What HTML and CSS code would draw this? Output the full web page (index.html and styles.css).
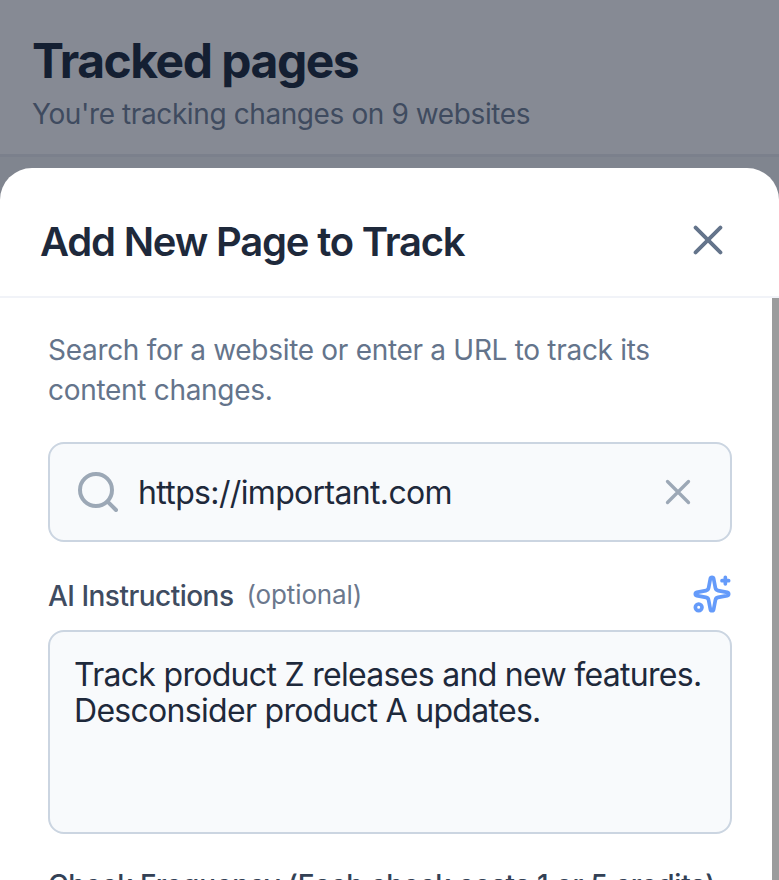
FILE: index.html
```html
<!DOCTYPE html>
<html lang="en">
<head>
<meta charset="utf-8">
<title>Tracked pages</title>
<link rel="stylesheet" href="styles.css">
</head>
<body>
<header class="page-header">
  <h1>Tracked pages</h1>
  <p>You're tracking changes on 9 websites</p>
</header>
<main class="sheet">
  <div class="sheet-head">
    <h2>Add New Page to Track</h2>
    <svg class="close" viewBox="0 0 30 30"><path d="M2.6 2.6 27.4 27.4M27.4 2.6 2.6 27.4"/></svg>
  </div>
  <div class="sheet-body">
    <div class="content">
      <p class="intro">Search for a website or enter a URL to track its<br>content changes.</p>
      <div class="search">
        <svg class="lens" viewBox="0 0 40 40"><circle cx="18" cy="18" r="16"/><path d="m29.6 29.6 8.4 8.4"/></svg>
        <span class="url">https://important.com</span>
        <svg class="clear" viewBox="0 0 26 26"><path d="M2.5 2.5 23.5 23.5M23.5 2.5 2.5 23.5"/></svg>
      </div>
      <div class="label-row">
        <span class="label">AI Instructions</span><span class="optional">(optional)</span>
        <svg class="sparkles" viewBox="0 0 24 24"><path d="M11.017 2.814a1 1 0 0 1 1.966 0l1.051 5.558a2 2 0 0 0 1.594 1.594l5.558 1.051a1 1 0 0 1 0 1.966l-5.558 1.051a2 2 0 0 0-1.594 1.594l-1.051 5.558a1 1 0 0 1-1.966 0l-1.051-5.558a2 2 0 0 0-1.594-1.594l-5.558-1.051a1 1 0 0 1 0-1.966l5.558-1.051a2 2 0 0 0 1.594-1.594zM20 2v4M22 4h-4"/><circle cx="4" cy="20" r="2"/></svg>
      </div>
      <div class="instructions">Track product Z releases and new features.<br>Desconsider product A updates.</div>
      <div class="frequency">Check Frequency (Each check costs 1 or 5 credits)</div>
    </div>
    <div class="scrollbar"></div>
  </div>
</main>
</body>
</html>
```
FILE: styles.css
```css
* { box-sizing: border-box; }
body { margin: 0; height: 880px; overflow: hidden; background: #80858f; font-family: Inter, "Liberation Sans", sans-serif; color: #1e293b; }
h1, h2, p { margin: 0; white-space: nowrap; }
svg { display: block; fill: none; stroke: currentColor; stroke-linecap: round; stroke-linejoin: round; flex: none; }
.page-header { height: 168px; padding: 33px 32px 0; background: linear-gradient(#868a94 154px, #7b808c 154px, #7b808c 157px, #80858f 157px); }
h1 { font-size: 48px; line-height: 56px; font-weight: 700; letter-spacing: -1.5px; color: #141f32; }
.page-header p { margin-top: 7px; font-size: 28px; line-height: 36px; letter-spacing: -0.4px; color: #3f4b5f; }
.sheet { height: 712px; background: #fff; border-radius: 32px 32px 0 0; overflow: hidden; }
.sheet-head { height: 130px; padding: 16px 56px 0 40px; display: flex; align-items: center; justify-content: space-between; border-bottom: 2px solid #f1f3f8; }
h2 { padding-top: 3px; font-size: 40px; line-height: 48px; font-weight: 600; letter-spacing: -1.2px; }
.close { width: 30px; height: 30px; stroke: #64748b; stroke-width: 3.9; }
.sheet-body { display: flex; height: 582px; }
.content { width: 772px; padding: 32px 40px 0 48px; }
.scrollbar { width: 7px; background: #9b9c9d; }
.intro { font-size: 28px; line-height: 40px; letter-spacing: -0.3px; color: #64748b; }
.search { display: flex; align-items: center; width: 684px; height: 100px; margin-top: 32px; padding: 0 39px 0 28px; border: 2px solid #cbd5e1; border-radius: 16px; background: #f8fafc; }
.lens { width: 40px; height: 40px; stroke: #9ca8b6; stroke-width: 4; }
.url { flex: 1; margin-left: 20px; font-size: 32px; letter-spacing: -0.65px; white-space: nowrap; }
.clear { width: 26px; height: 26px; stroke: #9ca8b6; stroke-width: 3.3; }
.label-row { display: flex; align-items: center; width: 684px; height: 40px; margin-top: 32px; margin-bottom: 16px; white-space: nowrap; }
.label { padding-top: 3px; font-size: 28px; font-weight: 500; letter-spacing: -0.52px; color: #3f4c61; }
.optional { margin-left: 13px; padding-top: 1px; font-size: 26px; letter-spacing: -0.12px; color: #6b788d; }
.sparkles { width: 40px; height: 40px; margin-left: auto; stroke: #659bfa; stroke-width: 2.2; }
.instructions { width: 684px; height: 204px; padding: 25px 24px; border: 2px solid #cbd5e1; border-radius: 16px; background: #f8fafc; font-size: 32px; line-height: 36px; letter-spacing: -0.7px; white-space: nowrap; }
.frequency { margin-top: 33px; font-size: 28px; line-height: 36px; font-weight: 500; letter-spacing: -0.17px; color: #334155; white-space: nowrap; }
```
